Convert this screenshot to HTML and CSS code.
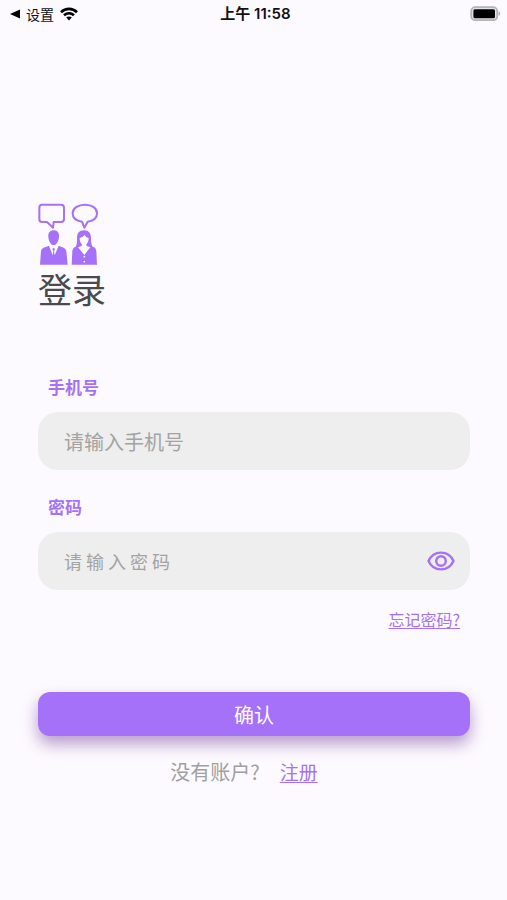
FILE: index.html
```
<!DOCTYPE html>
<html lang="zh-CN">
<head>
    <meta charset="UTF-8">
    <meta name="viewport" content="width=device-width, initial-scale=1.0">
    <title>登录</title>
    <link rel="stylesheet" href="styles.css">
</head>
<body>
    <!-- 状态栏 -->
    <header class="status-bar">
        <div class="status-left">
            <svg class="back-icon" viewBox="0 0 10 10" aria-hidden="true"><path d="M0 5 L10 0.5 V9.5 Z"/></svg>
            <span>设置</span>
            <svg class="wifi-icon" viewBox="0 0 18 14" aria-hidden="true">
                <path d="M1 5.2 C5.6 0.7 12.4 0.7 17 5.2" />
                <path d="M4 8.3 C7 5.6 11 5.6 14 8.3" />
                <path class="wifi-dot" d="M6.2 10.6 C7.8 9.2 10.2 9.2 11.8 10.6 L9 13.6 Z" />
            </svg>
        </div>
        <div class="status-time">上午 11:58</div>
        <div class="status-right">
            <svg class="battery-icon" viewBox="0 0 31 16" aria-hidden="true">
                <rect x="1.2" y="1.2" width="26" height="13" rx="4" fill="#e6e4e8" stroke="#b5b3b7" stroke-width="1.8"/>
                <rect x="3.4" y="3.2" width="21.6" height="9" rx="1.5" fill="#000"/>
                <path d="M28.6 5.2 C30.6 6 30.6 9 28.6 9.8 Z" fill="#aaa8ac"/>
            </svg>
        </div>
    </header>

    <main class="login">
        <svg class="logo" viewBox="24 24 180 186" aria-hidden="true">
            <!-- 对话气泡 -->
            <g fill="none" stroke="#a571f8" stroke-width="6" stroke-linejoin="round">
                <path d="M36 29 H93 Q102 29 102 38 V72 Q102 81 93 81 H71 L69 98 L51 81 H36 Q28 81 28 72 V38 Q28 29 36 29 Z"/>
                <path d="M165 29 C187 29 201 40 201 55 C201 69 190 78 173 80 L163 98 L156 80 C139 78 128 69 128 55 C128 40 143 29 165 29 Z"/>
            </g>
            <!-- 男士 -->
            <g fill="#a571f8">
                <path d="M71 106 C82 106 88 113 87 125 C86 138 80 150 71 150 C62 150 56 138 55 125 C54 113 60 106 71 106 Z"/>
                <path d="M57 152 L68 181 L70 168 L67 162 L71 158 L75 162 L72 168 L74 181 L86 152 L101 158 Q107 160 109 168 L113 209 H30 L33 168 Q34 160 41 158 Z"/>
            </g>
            <!-- 女士 -->
            <path fill="#a571f8" d="M162 106 C176 106 183 115 183 129 C183 142 184 148 188 155 L193 157 Q198 160 199 168 L201 209 H125 L127 168 Q128 160 133 157 L137 155 C141 148 141 142 141 129 C141 115 148 106 162 106 Z"/>
            <path fill="#fdfaff" d="M149 129 Q157 128 164 120 Q167 127 176 129 C176 139 173 144 169 148 L170 153 L181 157 L163 180 L144 157 L155 153 L156 148 C151 144 149 138 149 129 Z"/>
            <g fill="#fdfaff">
                <circle cx="163" cy="185" r="2.6"/>
                <circle cx="163" cy="200" r="2.6"/>
            </g>
        </svg>
        <h1>登录</h1>

        <form class="login-form">
            <label for="phone">手机号</label>
            <div class="field">
                <input type="tel" id="phone" placeholder="请输入手机号">
            </div>

            <label for="password">密码</label>
            <div class="field">
                <input type="password" id="password" class="password-input" placeholder="请输入密码">
                <button type="button" class="toggle-password" aria-label="显示密码">
                    <svg viewBox="0 0 28 20" fill="none" stroke="#a571f8" stroke-width="2.4" aria-hidden="true">
                        <path d="M1.5 10 C4 4.5 8.6 1.6 14 1.6 C19.4 1.6 24 4.5 26.5 10 C24 15.5 19.4 18.4 14 18.4 C8.6 18.4 4 15.5 1.5 10 Z"/>
                        <circle cx="14" cy="10" r="4.8"/>
                    </svg>
                </button>
            </div>

            <a href="#" class="forgot">忘记密码?</a>
            <button type="submit" class="submit">确认</button>
        </form>

        <p class="register">没有账户?<a href="#">注册</a></p>
    </main>
</body>
</html>
```
FILE: styles.css
```
* {
    box-sizing: border-box;
}

body {
    margin: 0;
    min-height: 100vh;
    background-color: #fdfaff;
    font-family: "Noto Sans CJK SC", sans-serif;
    color: #4a4a4a;
}

/* 状态栏 */
.status-bar {
    display: grid;
    grid-template-columns: 1fr auto 1fr;
    align-items: center;
    height: 28px;
    padding: 0 6px 0 10px;
    font-size: 14px;
    line-height: 26px;
    color: #111;
}

.status-left {
    display: flex;
    align-items: center;
    gap: 6px;
}

.back-icon {
    width: 10px;
    height: 10px;
}

.wifi-icon {
    width: 18px;
    height: 14px;
    fill: none;
    stroke: #000;
    stroke-width: 2.6;
}

.wifi-icon .wifi-dot {
    fill: #000;
    stroke: none;
}

.status-time {
    font-family: Inter, "Noto Sans CJK SC", sans-serif;
    font-size: 15px;
    font-weight: 600;
}

.status-right {
    display: flex;
    justify-content: flex-end;
}

.battery-icon {
    width: 31px;
    height: 16px;
}

/* 登录 */
.login {
    padding: 175px 37px 40px 38px;
}

.logo {
    display: block;
    width: 60px;
    height: 62px;
}

h1 {
    margin: 0;
    font-size: 34px;
    font-weight: 400;
    line-height: 48px;
}

.login-form {
    display: flex;
    flex-direction: column;
    margin-top: 60px;
}

label {
    padding-left: 10px;
    font-size: 17px;
    font-weight: 700;
    line-height: 28px;
    color: #a571f8;
}

.field {
    display: flex;
    align-items: center;
    height: 58px;
    margin: 11px 0 23px;
    padding: 0 15px 0 26px;
    border-radius: 20px;
    background-color: #eee;
}

.field input {
    flex: 1;
    min-width: 0;
    height: 100%;
    padding: 0;
    border: none;
    outline: none;
    background: none;
    font-family: inherit;
    font-size: 20px;
    color: #4a4a4a;
}

.field input::placeholder {
    color: #a3a3a3;
    opacity: 1;
}

.field .password-input {
    font-size: 18px;
    letter-spacing: 4px;
}

.toggle-password {
    width: 28px;
    height: 20px;
    padding: 0;
    border: none;
    background: none;
    cursor: pointer;
}

.toggle-password svg {
    display: block;
    width: 28px;
    height: 20px;
}

a {
    color: #a571f8;
    text-underline-offset: 2px;
}

.forgot {
    align-self: flex-end;
    margin: -7px 10px 0 0;
    font-size: 16px;
    line-height: 26px;
}

.submit {
    height: 44px;
    margin-top: 60px;
    border: none;
    border-radius: 12px;
    background-color: #a571f8;
    box-shadow: 0 8px 16px rgba(100, 40, 140, 0.45);
    font-family: inherit;
    font-size: 20px;
    color: #fff;
    cursor: pointer;
}

.register {
    display: flex;
    justify-content: center;
    gap: 20px;
    margin: 22px 0 0;
    padding-right: 20px;
    font-size: 20px;
    line-height: 28px;
    color: #a0a0a0;
}

.register a {
    font-size: 19px;
}
```
